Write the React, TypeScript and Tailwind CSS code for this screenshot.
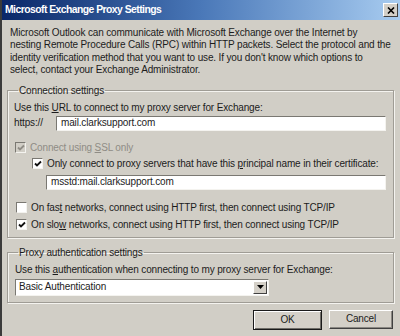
const font = "font-['Liberation_Sans',Arial,sans-serif]";
const txt = 'text-[10px] tracking-[-0.15px] leading-[12px]';

function Check({ checked, disabled }: { checked?: boolean; disabled?: boolean }) {
  return (
    <span
      className={`inline-flex h-[11px] w-[11px] shrink-0 items-center justify-center border border-t-[#7a7872] border-l-[#7a7872] border-b-[#f4f3ef] border-r-[#f4f3ef] ${
        disabled ? 'bg-[#d1cec6]' : 'bg-white'
      }`}
    >
      {checked && (
        <svg width="8" height="8" viewBox="0 0 8 8">
          <path
            d="M1 3.5 L3 5.5 L7 1.5"
            fill="none"
            stroke={disabled ? '#8f8c85' : '#111'}
            strokeWidth="1.8"
          />
        </svg>
      )}
    </span>
  );
}

function Field({ value, className }: { value: string; className: string }) {
  return (
    <div
      className={`flex h-[15px] items-center border border-t-[#7a7872] border-l-[#7a7872] border-b-[#f4f3ef] border-r-[#f4f3ef] bg-white px-[4px] ${txt} ${className}`}
    >
      {value}
    </div>
  );
}

export default function App() {
  return (
    <div
      className={`flex h-[336px] w-[400px] flex-col overflow-hidden border-l-2 border-[#3b3b3b] bg-[#d1cec6] text-[#1c1c1c] ${font}`}
    >
      {/* title bar */}
      <div className="flex h-[20px] shrink-0 items-center justify-between bg-linear-to-r from-[#0b2768] via-[#4a78b8] to-[#a8ccf0] pl-[3px] pr-[2px]">
        <span className="text-[10.4px] font-bold tracking-[-0.55px] text-white">Microsoft Exchange Proxy Settings</span>
        <span className="flex h-[14px] w-[15px] items-center justify-center border border-t-white border-l-white border-b-[#404040] border-r-[#404040] bg-[#d4d0c8]">
          <svg width="8" height="7" viewBox="0 0 8 7">
            <path d="M1 0.5 L7 6.5 M7 0.5 L1 6.5" stroke="#000" strokeWidth="1.6" />
          </svg>
        </span>
      </div>

      <div className="flex flex-col pl-[5px] pr-[6px]">
        <p className={`mt-[7px] whitespace-nowrap pl-[3px] !leading-[12.4px] ${txt}`}>
          Microsoft Outlook can communicate with Microsoft Exchange over the Internet by
          <br />
          nesting Remote Procedure Calls (RPC) within HTTP packets. Select the protocol and the
          <br />
          identity verification method that you want to use. If you don't know which options to
          <br />
          select, contact your Exchange Administrator.
        </p>

        {/* Connection settings */}
        <fieldset className="mt-[8px] h-[153px] border border-[#9f9c95] pl-[6px] pr-[6px] shadow-[inset_1px_1px_0_#f4f3ef,1px_1px_0_#f4f3ef]">
          <legend className={`ml-[4px] px-[1px] ${txt}`}>Connection settings</legend>
          <div className={`mt-[5px] ${txt}`}>
            Use this <u>U</u>RL to connect to my proxy server for Exchange:
          </div>
          <div className={`mt-[2px] flex items-center ${txt}`}>
            <span className="w-[42px]">https://</span>
            <Field value="mail.clarksupport.com" className="w-[330px]" />
          </div>
          <div className={`mt-[11px] flex items-center gap-[4px] pl-[1px] text-[#8f8c85] ${txt}`}>
            <Check checked disabled />
            <span>
              Connect using <u>S</u>SL only
            </span>
          </div>
          <div className={`mt-[4px] flex items-center gap-[4px] pl-[18px] ${txt}`}>
            <Check checked />
            <span className="whitespace-nowrap">
              Only connect to proxy servers that have this <u>p</u>rincipal name in their certificate:
            </span>
          </div>
          <Field value="msstd:mail.clarksupport.com" className="ml-[32px] mt-[5px] w-[340px]" />
          <div className={`mt-[12px] flex items-center gap-[4px] pl-[2px] ${txt}`}>
            <Check />
            <span>
              On fas<u>t</u> networks, connect using HTTP first, then connect using TCP/IP
            </span>
          </div>
          <div className={`mt-[5px] flex items-center gap-[4px] pl-[2px] ${txt}`}>
            <Check checked />
            <span>
              On slo<u>w</u> networks, connect using HTTP first, then connect using TCP/IP
            </span>
          </div>
        </fieldset>

        {/* Proxy authentication settings */}
        <fieldset className="mt-[9px] h-[56px] border border-[#9f9c95] pl-[7px] pr-[6px] shadow-[inset_1px_1px_0_#f4f3ef,1px_1px_0_#f4f3ef]">
          <legend className={`ml-[3px] px-[1px] ${txt}`}>Proxy authentication settings</legend>
          <div className={`mt-[5px] ${txt}`}>
            Use this <u>a</u>uthentication when connecting to my proxy server for Exchange:
          </div>
          <div className={`mt-[3px] flex h-[17px] w-[254px] items-center justify-between border border-t-[#7a7872] border-l-[#7a7872] border-b-[#f4f3ef] border-r-[#f4f3ef] bg-white pl-[3px] pr-[1px] ${txt}`}>
            <span>Basic Authentication</span>
            <span className="flex h-[13px] w-[14px] items-center justify-center border border-t-white border-l-white border-b-[#404040] border-r-[#404040] bg-[#d4d0c8]">
              <svg width="7" height="4" viewBox="0 0 7 4">
                <path d="M0 0 H7 L3.5 4 Z" fill="#000" />
              </svg>
            </span>
          </div>
        </fieldset>

        {/* buttons */}
        <div className="mt-[7px] flex justify-end gap-[7px] pr-[1px]">
          <button className={`flex h-[20px] w-[69px] items-center justify-center border border-[#1a1a1a] bg-[#d4d0c8] shadow-[inset_1px_1px_0_#fff,inset_-1px_-1px_0_#6e6c67] ${txt}`}>
            OK
          </button>
          <button className={`flex h-[19px] w-[64px] items-center justify-center border border-t-white border-l-white border-b-[#404040] border-r-[#404040] bg-[#d4d0c8] shadow-[inset_-1px_-1px_0_#8a8782] ${txt}`}>
            Cancel
          </button>
        </div>
      </div>
    </div>
  );
}
